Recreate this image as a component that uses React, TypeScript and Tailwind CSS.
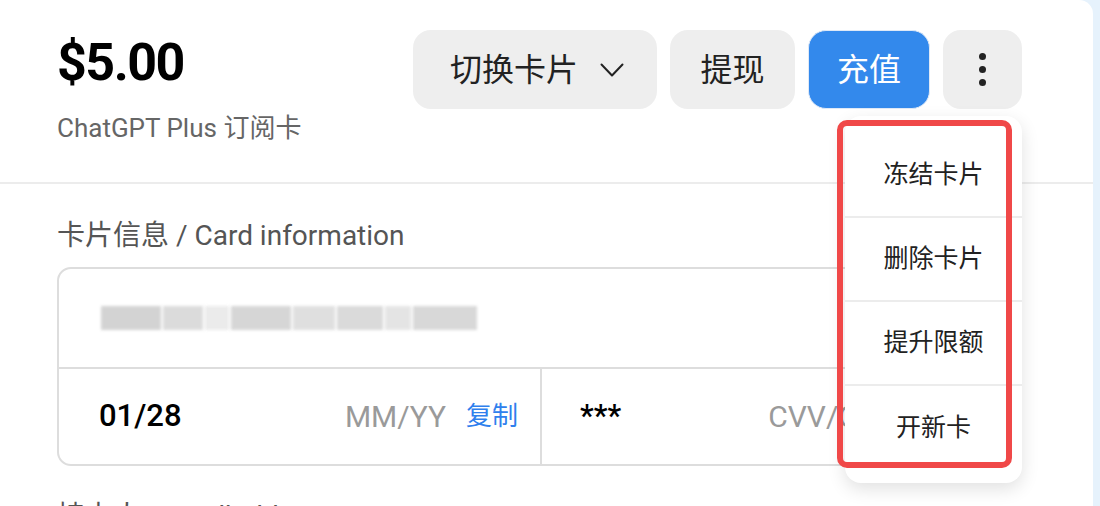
const font = "font-['Roboto','Noto_Sans_CJK_SC',sans-serif]";

const menuItems = ["冻结卡片", "删除卡片", "提升限额", "开新卡"];

function BlurredNumber() {
  // pixelated card number, blurred on purpose
  const blocks = [
    { w: 60, c: "bg-[#cfcfcf]" },
    { w: 40, c: "bg-[#d8d8d8]" },
    { w: 24, c: "bg-[#e9e9e9]" },
    { w: 60, c: "bg-[#d2d2d2]" },
    { w: 42, c: "bg-[#dcdcdc]" },
    { w: 46, c: "bg-[#d6d6d6]" },
    { w: 26, c: "bg-[#e2e2e2]" },
    { w: 64, c: "bg-[#d4d4d4]" },
  ];
  return (
    <div className="flex items-center gap-[2px] blur-[1.5px] opacity-90">
      {blocks.map((b, i) => (
        <div key={i} className={`h-[24px] ${b.c}`} style={{ width: b.w }} />
      ))}
    </div>
  );
}

function Chevron() {
  return (
    <svg width="24" height="14" viewBox="0 0 24 14" fill="none" stroke="#222" strokeWidth="2" strokeLinecap="round" strokeLinejoin="round">
      <polyline points="1.5,1.5 12,12.5 22.5,1.5" />
    </svg>
  );
}

export default function App() {
  return (
    <div className={`flex h-[506px] w-[1100px] overflow-hidden bg-[#e6f2fc] ${font}`}>
      <div className="relative h-full w-[1093px] rounded-tr-[14px] bg-white">
        <header className="flex h-[184px] items-start justify-between border-b-2 border-[#ececec] pl-[57px] pr-[71px]">
          <div className="pt-[32px]">
            <div className="text-[52px] leading-[62px] font-bold tracking-[-1.5px] text-black">$5.00</div>
            <div className="mt-[18px] text-[26px] leading-[32px] text-[#666666]">ChatGPT Plus 订阅卡</div>
          </div>
          <div className="flex gap-[13px] pt-[30px]">
            <button className="flex h-[79px] w-[244px] items-center justify-center gap-[22px] rounded-[18px] bg-[#eeeeee] pl-[4px] text-[32px] text-[#222222]">
              切换卡片
              <Chevron />
            </button>
            <button className="flex h-[79px] w-[125px] items-center justify-center rounded-[18px] bg-[#eeeeee] text-[32px] text-[#222222]">
              提现
            </button>
            <button className="flex h-[79px] w-[122px] items-center justify-center rounded-[18px] border border-[#dfe9f7] bg-[#3389ec] text-[32px] text-white">
              充值
            </button>
            <button className="flex h-[79px] w-[79px] flex-col items-center justify-center gap-[6px] rounded-[18px] bg-[#eeeeee]">
              <span className="h-[7px] w-[7px] rounded-full bg-[#222222]" />
              <span className="h-[7px] w-[7px] rounded-full bg-[#222222]" />
              <span className="h-[7px] w-[7px] rounded-full bg-[#222222]" />
            </button>
          </div>
        </header>

        <section className="pl-[57px] pr-[71px] pt-[34px]">
          <div className="text-[28px] leading-[36px] text-[#555555]">卡片信息 / Card information</div>
          <div className="mt-[13px] overflow-hidden rounded-[14px] border-2 border-[#dddddd]">
            <div className="flex h-[98px] items-center pl-[42px]">
              <BlurredNumber />
            </div>
            <div className="flex h-[97px] border-t-2 border-[#dddddd]">
              <div className="flex w-[483px] items-center border-r-2 border-[#dddddd] pl-[40px] pr-[22px]">
                <span className="text-[31px] font-medium text-black">01/28</span>
                <span className="ml-auto text-[30px] text-[#9a9a9a]">MM/YY</span>
                <span className="ml-[20px] text-[26px] text-[#2f80ed]">复制</span>
              </div>
              <div className="flex flex-1 items-center pl-[38px] pr-[22px]">
                <span className="text-[31px] font-medium text-black">***</span>
                <span className="ml-[147px] text-[30px] text-[#9a9a9a]">CVV/CVC</span>
                <span className="ml-auto text-[26px] text-[#2f80ed]">复制</span>
              </div>
            </div>
          </div>
          <div className="mt-[33px] text-[28px] leading-[36px] text-[#555555]">持卡人 / Cardholder name</div>
        </section>

        <div className="absolute left-[845px] top-[116px] h-[367px] w-[177px] rounded-[16px] bg-white shadow-[0_6px_18px_rgba(0,0,0,0.12)]">
          <div className="flex flex-col pt-[18px]">
            {menuItems.map((item, i) => (
              <div
                key={item}
                className={`flex h-[84px] items-center justify-center text-[25px] text-[#222222] ${i < 3 ? "border-b-2 border-[#ececec]" : ""}`}
              >
                {item}
              </div>
            ))}
          </div>
        </div>
        <div className="pointer-events-none absolute left-[837px] top-[120px] h-[348px] w-[175px] rounded-[10px] border-[6px] border-[#f04848]" />
      </div>
    </div>
  );
}
